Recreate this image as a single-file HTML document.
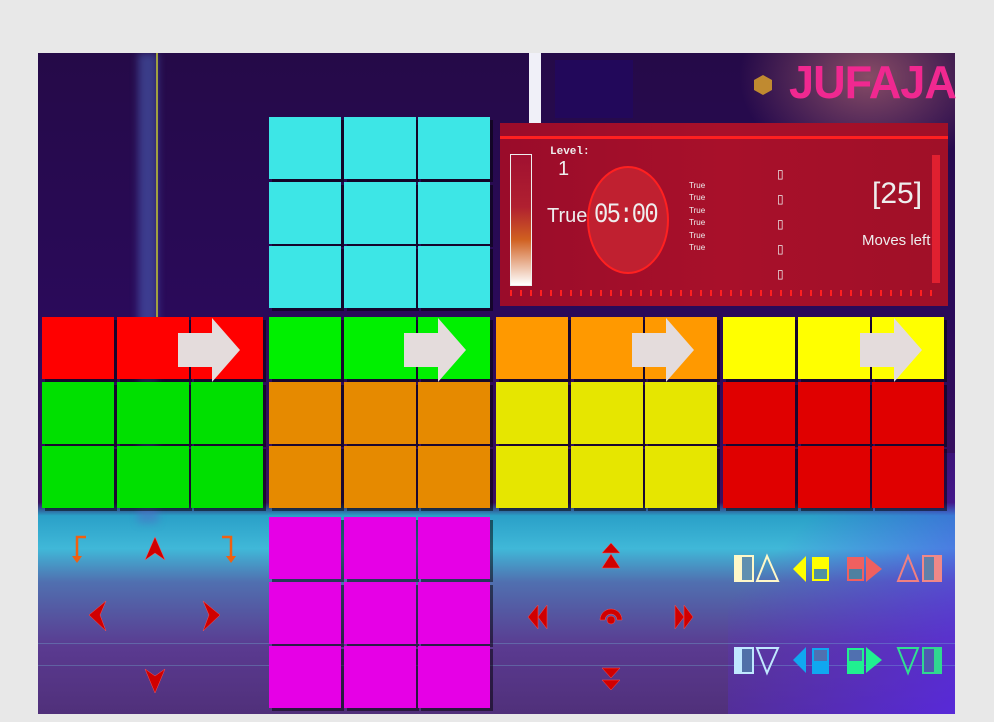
<!DOCTYPE html>
<html><head><style>
body{margin:0;width:994px;height:722px;background:#e8e8e8;position:relative;overflow:hidden;font-family:"Liberation Sans",sans-serif}
.a{position:absolute}
#f{left:38px;top:53px;width:917px;height:661px;background:linear-gradient(180deg,#250a48 0%,#2a0a5a 40%,#3a1060 68%,#2aa0c8 70%,#40b8d8 75%,#5070b0 80%,#5a3a90 90%,#50307a 100%);overflow:hidden}
.t{position:absolute;width:72px;height:62px;box-shadow:3px 3px 0 rgba(0,0,0,.5)}
</style></head><body>
<div id="f" class="a">
 <div class="a" style="left:100px;top:0;width:20px;height:470px;background:rgba(80,110,200,.5);filter:blur(4px)"></div>
 <div class="a" style="left:118px;top:0;width:2px;height:265px;background:#a0a040"></div>
 <div class="a" style="left:700px;top:0;width:217px;height:120px;background:radial-gradient(ellipse at 60% 20%,rgba(200,120,120,.6),transparent 70%)"></div>
 <div class="a" style="left:690px;top:400px;width:227px;height:261px;background:linear-gradient(135deg,transparent 30%,rgba(90,40,240,.8))"></div>
 <div class="a" style="left:0;top:590px;width:917px;height:1px;background:rgba(120,200,220,.3)"></div>
 <div class="a" style="left:0;top:612px;width:917px;height:1px;background:rgba(120,200,220,.3)"></div>
</div>
<div class="a" style="left:529px;top:53px;width:12px;height:70px;background:#f0f0f8"></div>
<div class="a" style="left:555px;top:60px;width:78px;height:58px;background:#22085a"></div>
<!-- logo -->
<div class="a" style="left:754px;top:75px;width:18px;height:20px;background:#c08a30;clip-path:polygon(50% 0,100% 25%,100% 75%,50% 100%,0 75%,0 25%)"></div>
<div class="a" style="left:789px;top:58px;font-size:46px;font-weight:bold;color:#f02890;letter-spacing:-1px;line-height:48px;transform:scaleX(0.98);transform-origin:left">JUFAJA</div>
<!-- HUD -->
<div class="a" style="left:500px;top:123px;width:448px;height:183px;background:linear-gradient(90deg,#9a0c2a,#a8102a 50%,#a01028);"></div>
<div class="a" style="left:500px;top:136px;width:448px;height:3px;background:#ff2020"></div>
<div class="a" style="left:510px;top:154px;width:20px;height:130px;border:1px solid #eee;background:linear-gradient(180deg,#a01030,#b02030 40%,#d06020 65%,#fff 100%)"></div>
<div class="a" style="left:550px;top:146px;color:#eee;font-family:'Liberation Mono',monospace;font-size:11px;font-weight:bold">Level:</div>
<div class="a" style="left:558px;top:158px;color:#eee;font-size:20px">1</div>
<div class="a" style="left:547px;top:205px;color:#eee;font-size:20px">True</div>
<div class="a" style="left:587px;top:166px;width:78px;height:104px;border-radius:50%;background:#c02030;border:2px solid #ff2020"></div>
<div class="a" style="left:594px;top:200px;color:#eee;font-family:'Liberation Mono',monospace;font-size:28px;letter-spacing:-2px;transform:scaleX(0.85);transform-origin:left">05:00</div>
<div class="a" style="left:689px;top:180px;color:#eee;font-size:8px;line-height:12.4px">True<br>True<br>True<br>True<br>True<br>True</div>
<div class="a" style="left:777px;top:162px;color:#eee;font-size:12px;line-height:25px">▯<br>▯<br>▯<br>▯<br>▯</div>
<div class="a" style="left:872px;top:177px;color:#eee;font-size:30px">[25]</div>
<div class="a" style="left:862px;top:232px;color:#eee;font-size:15px">Moves left</div>
<div class="a" style="left:932px;top:155px;width:8px;height:128px;background:#e02030"></div>
<div class="a" style="left:510px;top:290px;width:430px;height:6px;background:repeating-linear-gradient(90deg,#ff2020 0 2px,transparent 2px 10px)"></div>
<!-- tiles -->
<div id="tiles"></div>
<svg class="a" style="left:0;top:0" width="994" height="722">
 <g fill="#e4dcdc">
  <polygon points="178,333 212,333 212,318 240,350 212,382 212,367 178,367"/>
  <polygon points="404,333 438,333 438,318 466,350 438,382 438,367 404,367"/>
  <polygon points="632,333 666,333 666,318 694,350 666,382 666,367 632,367"/>
  <polygon points="860,333 894,333 894,318 922,350 894,382 894,367 860,367"/>
 </g>
 <g fill="none" stroke="#f06010" stroke-width="2.5">
  <path d="M86,537 H77 V558"/><path d="M222,537 H231 V558"/>
 </g>
 <g fill="#f06010"><polygon points="72,556 82,556 77,563"/><polygon points="226,556 236,556 231,563"/></g>
 <g fill="#d00000" stroke="#ff5050" stroke-width=".5">
  <polygon points="155,537 165,560 155,553 145,560"/>
  <polygon points="89,615 106,601 100,615 106,631"/>
  <polygon points="220,615 203,601 209,615 203,631"/>
  <polygon points="155,693 165,669 155,676 145,669"/>
  <polygon points="611,543 620,553 602,553"/><polygon points="611,554 620,568 602,568"/>
  <polygon points="611,678 620,668 602,668"/><polygon points="611,690 620,680 602,680"/>
  <polygon points="528,617 538,605 538,629"/><polygon points="538,617 547,605 547,629"/>
  <polygon points="693,617 684,605 684,629"/><polygon points="684,617 675,605 675,629"/>
  <path d="M600,620 A11,11 0 0 1 622,620 L617,620 A6,6 0 0 0 605,620Z"/><circle cx="611" cy="620" r="4"/>
 </g>
 <!-- right icons row1 -->
 <rect x="734" y="555" width="20" height="27" fill="#fff8c8"/><rect x="742" y="557" width="10" height="23" fill="#6090b0"/>
 <polygon points="757,581 767,556 778,581" fill="none" stroke="#fff8c8" stroke-width="2"/>
 <polygon points="793,569 806,556 806,582" fill="#ffff00"/><rect x="812" y="557" width="17" height="24" fill="#ffff00"/><rect x="814" y="569" width="13" height="10" fill="#5090a0"/>
 <rect x="847" y="557" width="17" height="24" fill="#f06060"/><rect x="849" y="569" width="13" height="10" fill="#5080a0"/><polygon points="866,556 882,569 866,582" fill="#f06060"/>
 <polygon points="898,581 908,556 918,581" fill="none" stroke="#f08080" stroke-width="2"/><rect x="922" y="555" width="20" height="27" fill="#f08888"/><rect x="924" y="557" width="10" height="23" fill="#6080a8"/>
 <!-- row2 -->
 <rect x="734" y="647" width="20" height="27" fill="#c0e8ff"/><rect x="742" y="649" width="10" height="23" fill="#5070a8"/>
 <polygon points="757,648 767,673 778,648" fill="none" stroke="#c0e8ff" stroke-width="2"/>
 <polygon points="793,660 806,647 806,673" fill="#10a8f0"/><rect x="812" y="648" width="17" height="26" fill="#10a8f0"/><rect x="814" y="650" width="13" height="11" fill="#5070b0"/>
 <rect x="847" y="648" width="17" height="26" fill="#20f090"/><rect x="849" y="650" width="13" height="11" fill="#5070b0"/><polygon points="866,647 882,660 866,673" fill="#20f090"/>
 <polygon points="898,648 908,673 918,648" fill="none" stroke="#30e090" stroke-width="2"/><rect x="922" y="647" width="20" height="27" fill="#30d890"/><rect x="924" y="649" width="10" height="23" fill="#5058b0"/>
</svg>
<script>
var faces=[[269,117,['#3de6e6','#3de6e6','#3de6e6']],[42,317,['#ff0000','#00e000','#00e000']],[269,317,['#00f000','#e68a00','#e68a00']],[496,317,['#ff9900','#e6e600','#e6e600']],[723,317,['#ffff00','#e00000','#e00000']],[269,517,['#e600e6','#e600e6','#e600e6']]];
var h='';faces.forEach(function(f){for(var r=0;r<3;r++)for(var c=0;c<3;c++){h+='<div class="t" style="left:'+(f[0]+c*74.5)+'px;top:'+(f[1]+r*64.5)+'px;background:'+f[2][r]+'"></div>';}});
document.getElementById('tiles').innerHTML=h;
</script>
</body></html>
